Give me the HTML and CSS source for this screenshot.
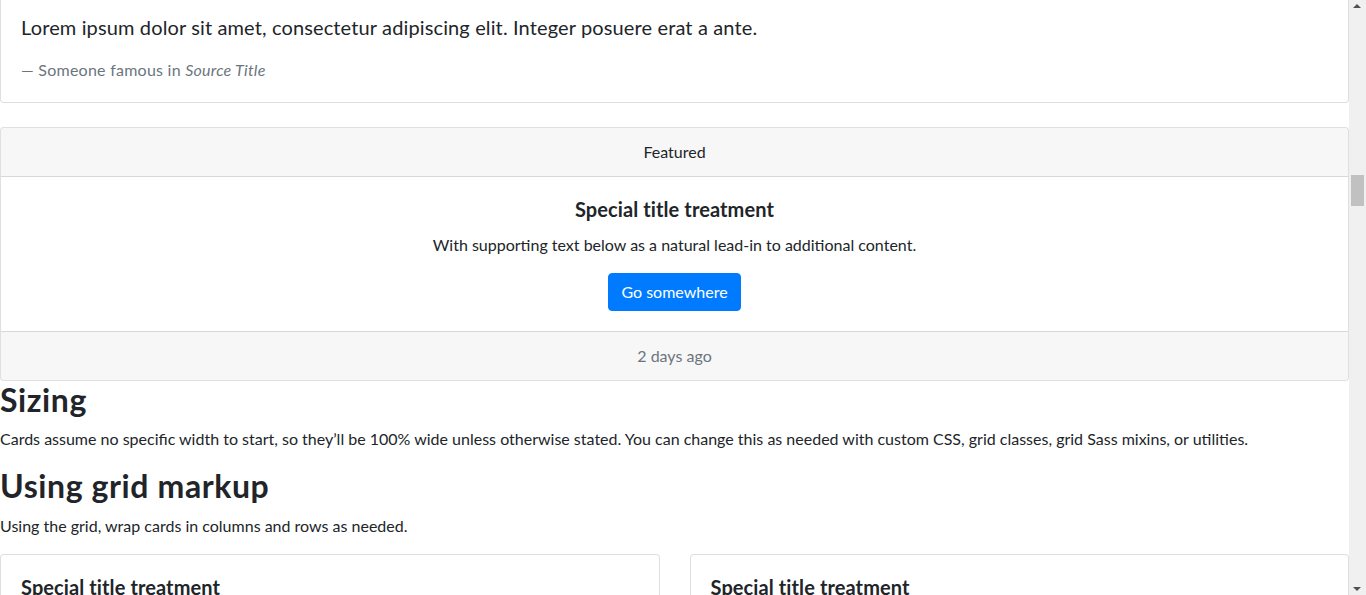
FILE: index.html
```html
<!DOCTYPE html>
<html lang="en">
<head>
<meta charset="utf-8">
<title>Cards</title>
<link rel="stylesheet" href="styles.css">
</head>
<body>
<div class="viewport">
  <main class="page">
    <div class="card card-quote">
      <div class="card-body">
        <blockquote class="blockquote">
          <p class="lead-quote">Lorem ipsum dolor sit amet, consectetur adipiscing elit. Integer posuere erat a ante.</p>
          <footer class="blockquote-footer">— Someone famous in <cite class="source">Source Title</cite></footer>
        </blockquote>
      </div>
    </div>

    <div class="card card-center">
      <div class="card-header">Featured</div>
      <div class="card-body">
        <h5 class="card-title">Special title treatment</h5>
        <p class="card-text">With supporting text below as a natural lead-in to additional content.</p>
        <a class="btn" href="#">Go somewhere</a>
      </div>
      <div class="card-footer">2 days ago</div>
    </div>

    <h2 class="section-title">Sizing</h2>
    <p class="section-text">Cards assume no specific width to start, so they’ll be 100% wide unless otherwise stated. You can change this as needed with custom CSS, grid classes, grid Sass mixins, or utilities.</p>

    <h2 class="section-title">Using grid markup</h2>
    <p class="section-text">Using the grid, wrap cards in columns and rows as needed.</p>

    <div class="grid-row">
      <div class="card">
        <div class="card-body">
          <h5 class="card-title">Special title treatment</h5>
          <p class="card-text">With supporting text below as a natural lead-in to additional content.</p>
        </div>
      </div>
      <div class="card">
        <div class="card-body">
          <h5 class="card-title">Special title treatment</h5>
          <p class="card-text">With supporting text below as a natural lead-in to additional content.</p>
        </div>
      </div>
    </div>
  </main>
  <div class="scrollbar" aria-hidden="true">
    <div class="sb-arrow sb-up"></div>
    <div class="sb-track"><div class="sb-thumb"></div></div>
    <div class="sb-arrow sb-down"></div>
  </div>
</div>
</body>
</html>
```
FILE: styles.css
```css
* { box-sizing: border-box; }
html, body { margin: 0; height: 100%; }
body {
  font-family: Lato, "Liberation Sans", sans-serif;
  font-size: 16px;
  line-height: 1.5;
  color: #212529;
  background: #fff;
  overflow: hidden;
}
.viewport {
  display: flex;
  height: 595px;
  overflow: hidden;
}
.page {
  flex: 1;
  min-width: 0;
  margin-top: -9px;
}

/* cards */
.card {
  border: 1px solid rgba(0,0,0,.125);
  border-radius: 4px;
  background: #fff;
  display: flex;
  flex-direction: column;
}
.card-body { padding: 20px; }
.card-quote { margin-bottom: 24px; }
.card-center { text-align: center; }
.card-header {
  padding: 12px 20px;
  background: rgba(0,0,0,.03);
  border-bottom: 1px solid rgba(0,0,0,.125);
  border-radius: 3px 3px 0 0;
}
.card-footer {
  padding: 12px 20px;
  background: rgba(0,0,0,.03);
  border-top: 1px solid rgba(0,0,0,.125);
  color: #6c757d;
  border-radius: 0 0 3px 3px;
}
.card-title {
  margin: 0 0 12px;
  font-size: 20px;
  font-weight: 700;
  line-height: 1.2;
  letter-spacing: 0.1px;
}
.card-text { margin: 0 0 16px; }

.blockquote { margin: 0; }
.lead-quote { margin: 0 0 16px; font-size: 20px; line-height: 30px; letter-spacing: 0.13px; }
.blockquote-footer { display: block; font-size: 16px; color: #6c757d; letter-spacing: 0.25px; }
.source { font-style: italic; }

.btn {
  display: inline-block;
  padding: 6px 12px;
  border: 1px solid #007bff;
  border-radius: 4px;
  background: #007bff;
  color: #fff;
  text-decoration: none;
  line-height: 24px;
}

.section-title {
  margin: 0 0 8px;
  font-size: 32px;
  font-weight: 700;
  line-height: 1.2;
  letter-spacing: 0.6px;
}
.section-text { margin: 0 0 16px; }

.grid-row {
  display: grid;
  grid-template-columns: 1fr 1fr;
  column-gap: 30px;
}

/* fake classic scrollbar */
.scrollbar {
  width: 17px;
  flex: none;
  background: #f0f0f0;
  display: flex;
  flex-direction: column;
}
.sb-arrow { height: 17px; position: relative; }
.sb-up::after, .sb-down::after {
  content: "";
  position: absolute;
  left: 4px;
  border-left: 4px solid transparent;
  border-right: 4px solid transparent;
}
.sb-up::after { top: 4px; border-bottom: 4px solid #505050; }
.sb-down::after { bottom: 4px; border-top: 4px solid #505050; }
.sb-track { flex: 1; padding-top: 158px; }
.sb-thumb {
  margin: 0 2px;
  height: 31px;
  background: #c1c1c1;
}
```
